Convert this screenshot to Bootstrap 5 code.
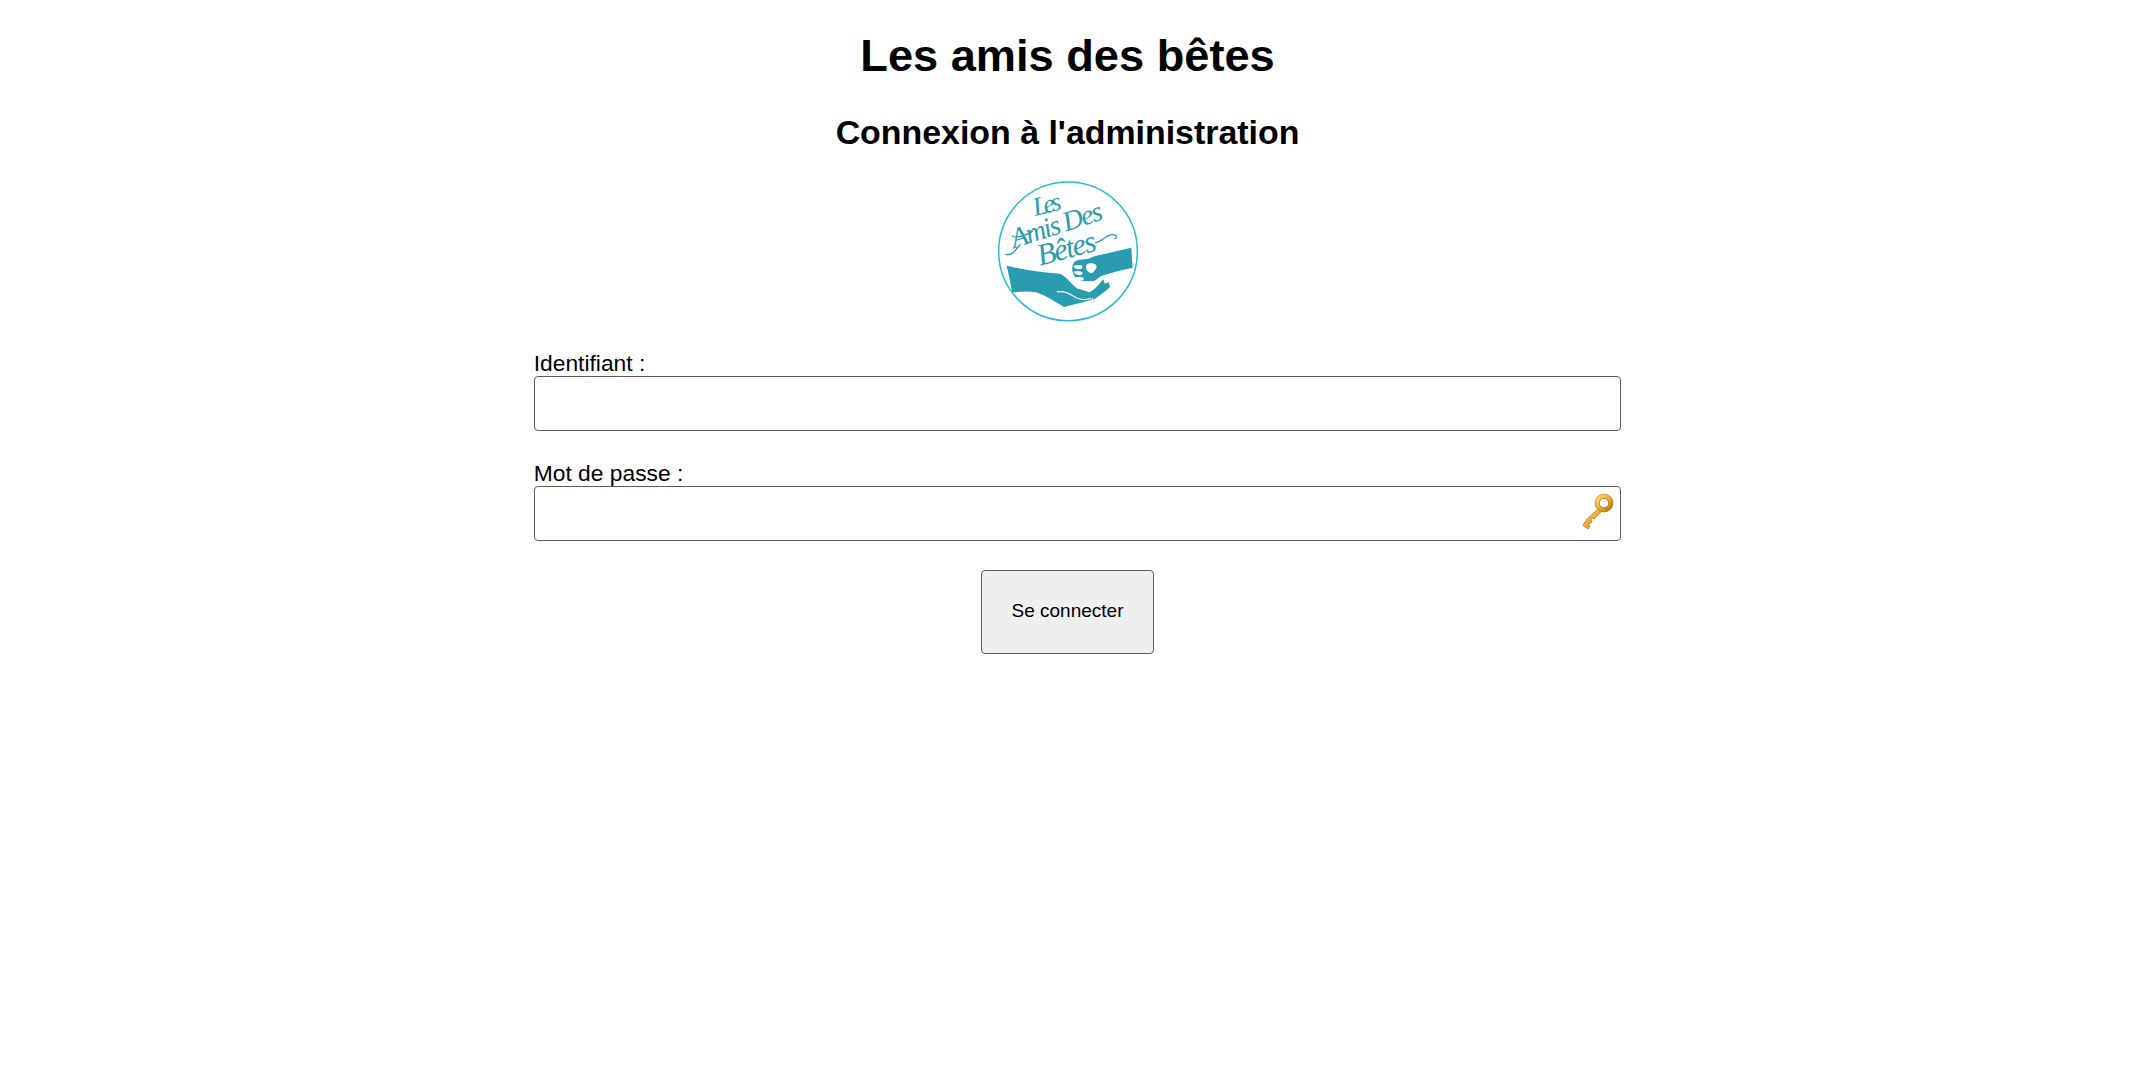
<!DOCTYPE html>
<html lang="fr">
<head>
  <meta charset="UTF-8"/>
  <title>Les amis des bêtes</title>
  <meta name="viewport" content="width=device-width, initial-scale=1"/>
  <link href="https://cdn.jsdelivr.net/npm/bootstrap@5.3.0/dist/css/bootstrap.min.css" rel="stylesheet"/>
  <style>
    body { background: #fff; color: #000; font-family: "Liberation Sans", Arial, sans-serif; font-size: 22.8px; }
    .site-title { font-size: 45.2px; font-weight: 700; line-height: 52px; margin: 30px 0 0; }
    .site-sub { font-size: 33.9px; font-weight: 700; line-height: 38px; margin: 31px 0 0; }
    .site-logo { display: block; width: 180px; height: 160px; margin: 19.5px auto 0; }
    .login-form { margin-top: 20px; }
    .login-label { display: block; line-height: 25px; margin: 0; }
    .login-input { display: block; width: calc(100% + 20px); height: 55px; padding: 0; border: 1.5px solid #5c5c5c; border-radius: 4px; background: #fff; box-shadow: none; }
    .pass-wrap { position: relative; margin-top: 30px; }
    .key-icon { position: absolute; right: -14px; bottom: 9px; width: 36px; height: 40px; }
    .login-btn { display: block; width: 173px; height: 84px; margin: 29px auto 0; padding: 0; font-size: 19px; color: #000; background: #efefef; border: 1.5px solid #5c5c5c; border-radius: 4px; }
  </style>
</head>
<body>
  <main class="text-center">
    <h1 class="site-title">Les amis des bêtes</h1>
    <h2 class="site-sub">Connexion à l'administration</h2>

    <!-- logo, coordinates are those of the 3x zoom -->
    <svg class="site-logo" viewBox="-8 0 540 480" role="img" aria-label="Les Amis Des Bêtes">
      <circle cx="262" cy="241" r="208" fill="#fff" stroke="#27b9d6" stroke-width="4.500"/>
      <g fill="#2a9cb0" font-family="'Liberation Serif', serif" font-style="italic">
        <text transform="translate(163 135) rotate(-14)" font-size="78" textLength="85">Les</text>
        <text transform="translate(100 232) rotate(-18)" font-size="84" textLength="285">Amis Des</text>
        <text transform="translate(178 284) rotate(-15)" font-size="92" textLength="180">Bêtes</text>
      </g>
      <g fill="none" stroke="#2a9cb0" stroke-width="4" stroke-linecap="round">
        <path d="M76 250c14 6 30-12 42-30"/>
        <path d="M95 195c18 8 40-2 60-14"/>
        <path d="M345 215c22-4 38-32 60-22 4 3 2 8-2 10"/>
      </g>
      <path fill="#2a9cb0" d="M78 284c50 12 105 20 160 24 18 8 34 30 50 44 16 6 34 8 44 16 4 8 4 14 0 18-24 8-56 14-82 22-28-16-56-36-84-44-22-4-46-2-72 0-4-26-10-54-16-80z"/>
      <path fill="none" stroke="#fff" stroke-width="3.500" stroke-linecap="round" d="M230 362c26-2 40 8 56 18 14 6 30 8 44 2"/>
      <path fill="#2a9cb0" d="M322 366c14-6 28-18 46-42l4 14 12-4 4 14c-14 14-32 26-50 38-2-8-8-14-16-20z"/>
      <path fill="#2a9cb0" d="M452 230l4 60c-30 6-62 14-92 24-12 4-16 16-30 16h-26c-14-2-24-8-30-20-6-14-4-30 4-38 8-6 20-6 36-8 10-2 18-8 30-10 34-8 70-16 104-24z"/>
      <path fill="#fff" d="M278 286c6-5 16-5 24-3 6 4 4 10-2 11-8 2-16 1-22-8zM278 303c8-4 18-4 26 0 4 4 0 9-6 9-8 0-16-2-20-9zM285 319c8-3 17-2 24 2 2 4-2 8-8 7-6 0-13-3-16-9zM318 280c8-4 18-4 26 0 6 6 4 14-2 18-2 8-12 10-18 5-8-4-10-16-6-23z"/>
    </svg>

    <form class="login-form w-50 mx-auto text-start">
      <div>
        <label class="login-label" for="identifiant">Identifiant :</label>
        <input class="login-input" id="identifiant" type="text"/>
      </div>
      <div class="pass-wrap">
        <label class="login-label" for="motdepasse">Mot de passe :</label>
        <input class="login-input" id="motdepasse" type="password"/>
        <svg class="key-icon" viewBox="0 0 36 40" aria-hidden="true">
          <defs>
            <linearGradient id="keyGold" x1="0" y1="0" x2="1" y2="1">
              <stop offset="0" stop-color="#f9dc7c"/>
              <stop offset=".55" stop-color="#e8a92e"/>
              <stop offset="1" stop-color="#b8741a"/>
            </linearGradient>
          </defs>
          <path fill="url(#keyGold)" stroke="#b8741a" stroke-width=".7" d="M21 15 8 27l-2 3-2 3 2 2 3 2 2-3-2-2 3-1 1-2-1-2 2-1 1 1 10-10z"/>
          <circle cx="25" cy="11" r="6.800" fill="none" stroke="#b8741a" stroke-width="5"/>
          <circle cx="25" cy="11" r="6.800" fill="none" stroke="url(#keyGold)" stroke-width="3.800"/>
          <circle cx="25" cy="11" r="2.800" fill="#fff"/>
        </svg>
      </div>
      <button class="login-btn" type="button">Se connecter</button>
    </form>
  </main>
  <script src="https://cdn.jsdelivr.net/npm/bootstrap@5.3.0/dist/js/bootstrap.bundle.min.js"></script>
</body>
</html>
